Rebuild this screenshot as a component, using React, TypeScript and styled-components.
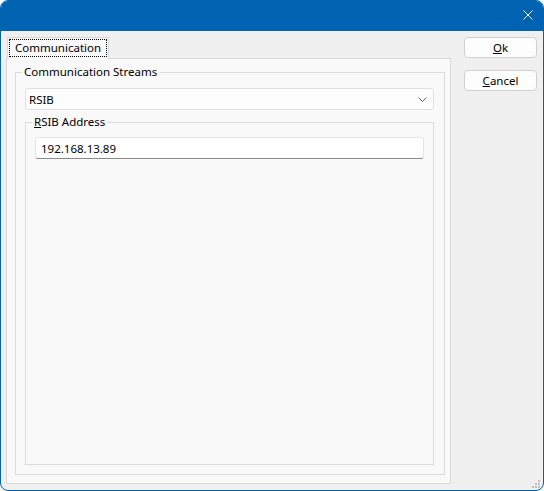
import styled, { createGlobalStyle } from 'styled-components';

const GlobalStyle = createGlobalStyle`
  html, body {
    margin: 0;
    padding: 0;
    background: #ffffff;
  }
  * {
    box-sizing: border-box;
  }
`;

const Window = styled.div`
  position: relative;
  width: 544px;
  height: 491px;
  display: flex;
  flex-direction: column;
  border: 1px solid #0063b1;
  border-radius: 8px;
  overflow: hidden;
  background: #f0f0f0;
  font-family: 'Noto Sans', 'Open Sans', sans-serif;
  font-size: 11.5px;
  color: #000;
`;

const TitleBar = styled.div`
  height: 30px;
  flex-shrink: 0;
  display: flex;
  align-items: center;
  justify-content: flex-end;
  padding: 0 10px 2px 0;
  background: #0063b1;
`;

const Body = styled.div`
  flex: 1;
  min-height: 0;
  display: flex;
  padding: 6px 6px 6px 5px;
`;

const Main = styled.div`
  width: 445px;
  display: flex;
  flex-direction: column;
`;

const TabStrip = styled.div`
  display: flex;
  padding-left: 1px;
`;

const Tab = styled.div`
  position: relative;
  z-index: 1;
  width: 102px;
  height: 22px;
  margin-bottom: -1px;
  padding: 1px 1px 2px 1px;
  border: 1px solid #d9d9d9;
  border-bottom: none;
  background: #f9f9f9;
  display: flex;
`;

const FocusRect = styled.span`
  flex: 1;
  display: flex;
  align-items: center;
  padding-left: 5px;
  border: 1px dotted #000;
  line-height: 1;
`;

const Panel = styled.div`
  flex: 1;
  display: flex;
  flex-direction: column;
  padding: 5px 5px 8px 8px;
  border: 1px solid #d9d9d9;
  background: #f9f9f9;
`;

const Group = styled.fieldset<{ $pad: string }>`
  flex: 1;
  min-width: 0;
  margin: 0;
  display: flex;
  flex-direction: column;
  padding: ${(p) => p.$pad};
  border: 1px solid #dcdcdc;
`;

const Caption = styled.legend`
  margin-left: -3px;
  padding: 0 2px;
  height: 16px;
  line-height: 16px;
`;

const Combo = styled.div`
  height: 22px;
  flex-shrink: 0;
  display: flex;
  align-items: center;
  justify-content: space-between;
  padding: 0 6px 0 3px;
  margin-bottom: 4px;
  border: 1px solid #e1e1e1;
  border-radius: 3px;
  background: #fdfdfd;
`;

const TextBox = styled.div`
  height: 22px;
  display: flex;
  align-items: center;
  padding-left: 5px;
  border: 1px solid #e5e5e5;
  border-bottom-color: #8a8a8a;
  border-radius: 3px;
  background: #ffffff;
`;

const Side = styled.div`
  width: 73px;
  margin-left: 13px;
  display: flex;
  flex-direction: column;
  gap: 12px;
`;

const Button = styled.button`
  height: 21px;
  padding: 0;
  border: 1px solid #d0d0d0;
  border-radius: 4px;
  background: #fdfdfd;
  font: inherit;
  color: #000;
  line-height: 1;
`;

const Grip = styled.svg`
  position: absolute;
  right: 3px;
  bottom: 2px;
`;

const Close = () => (
  <svg width="10" height="10" viewBox="0 0 10 10">
    <path d="M0.5 0.5 L9.5 9.5 M9.5 0.5 L0.5 9.5" stroke="#fff" strokeWidth="1" fill="none" />
  </svg>
);

const Chevron = () => (
  <svg width="9" height="5" viewBox="0 0 9 5">
    <path d="M0.5 0.5 L4.5 4.5 L8.5 0.5" stroke="#606060" strokeWidth="1" fill="none" />
  </svg>
);

const grip = [
  [6, 0],
  [3, 3],
  [6, 3],
  [0, 6],
  [3, 6],
  [6, 6],
];

const App = () => {
  return (
    <>
      <GlobalStyle />
      <Window>
        <TitleBar>
          <Close />
        </TitleBar>
        <Body>
          <Main>
            <TabStrip>
              <Tab>
                <FocusRect>Communication</FocusRect>
              </Tab>
            </TabStrip>
            <Panel>
              <Group $pad="8px 10px 9px 9px">
                <Caption>Communication Streams</Caption>
                <Combo>
                  <span>RSIB</span>
                  <Chevron />
                </Combo>
                <Group $pad="7px 9px 9px 9px">
                  <Caption>
                    <u>R</u>SIB Address
                  </Caption>
                  <TextBox>192.168.13.89</TextBox>
                </Group>
              </Group>
            </Panel>
          </Main>
          <Side>
            <Button>
              <u>O</u>k
            </Button>
            <Button>
              <u>C</u>ancel
            </Button>
          </Side>
        </Body>
        <Grip width="8" height="8" viewBox="0 0 8 8">
          {grip.map(([x, y]) => (
            <rect key={`${x}-${y}`} x={x} y={y} width="2" height="2" fill="#bdbdbd" />
          ))}
        </Grip>
      </Window>
    </>
  );
};

export default App;
